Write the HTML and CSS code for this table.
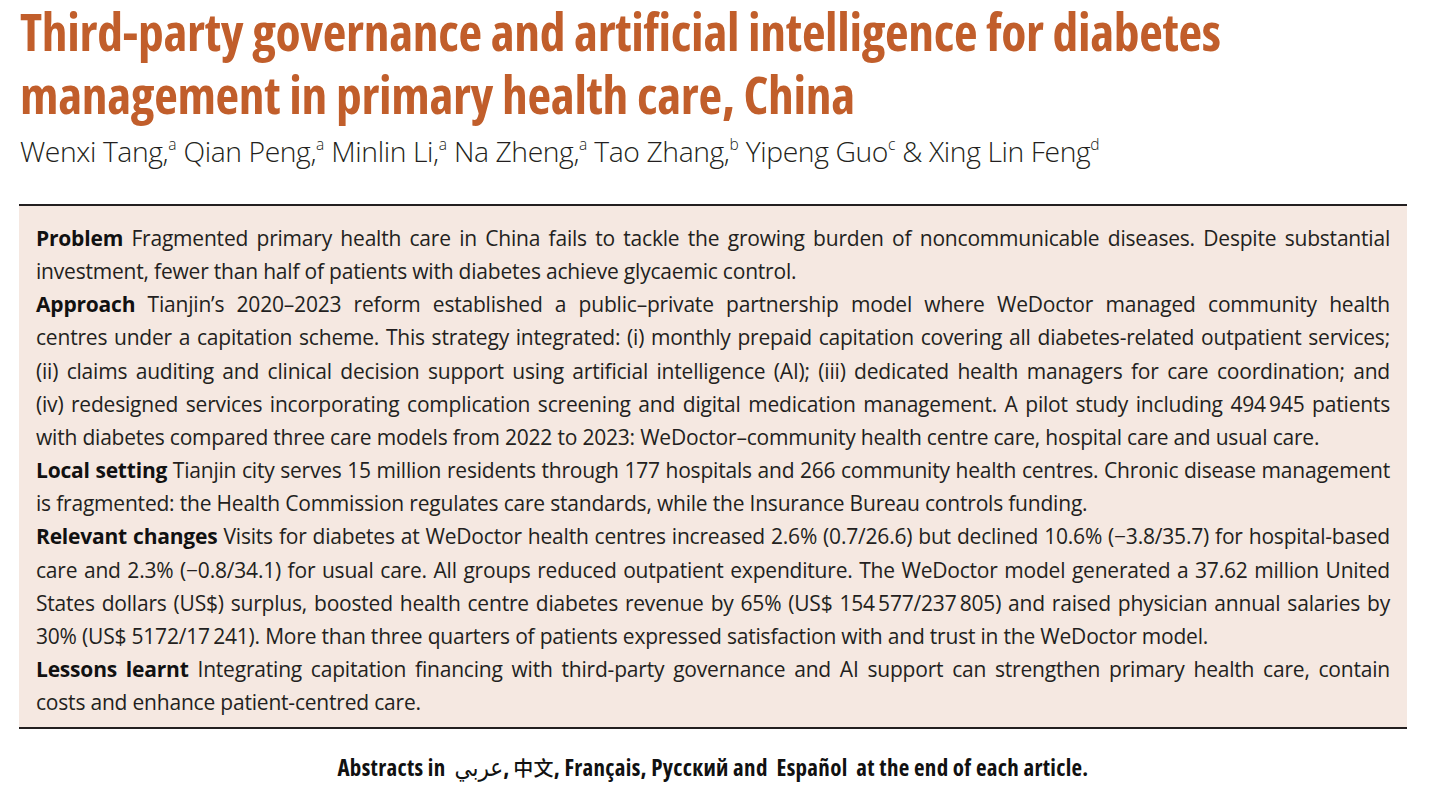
FILE: index.html
```html
<!DOCTYPE html>
<html lang="en">
<head>
<meta charset="utf-8">
<title>Third-party governance and artificial intelligence for diabetes management</title>
<link rel="stylesheet" href="styles.css">
</head>
<body>
<main class="page">
  <h1 class="title">Third-party governance and artificial intelligence for diabetes management in primary health care, China</h1>
  <p class="authors">Wenxi Tang,<sup>a</sup> Qian Peng,<sup>a</sup> Minlin Li,<sup>a</sup> Na Zheng,<sup>a</sup> Tao Zhang,<sup>b</sup> Yipeng Guo<sup>c</sup> &amp; Xing Lin Feng<sup>d</sup></p>
  <section class="abstract">
    <p class="para">
      <span class="ln"><b>Problem</b> Fragmented primary health care in China fails to tackle the growing burden of noncommunicable diseases. Despite substantial</span>
      <span class="ln last">investment, fewer than half of patients with diabetes achieve glycaemic control.</span>
    </p>
    <p class="para">
      <span class="ln"><b>Approach</b> Tianjin’s 2020–2023 reform established a public–private partnership model where WeDoctor managed community health</span>
      <span class="ln">centres under a capitation scheme. This strategy integrated: (i) monthly prepaid capitation covering all diabetes-related outpatient services;</span>
      <span class="ln">(ii) claims auditing and clinical decision support using artificial intelligence (AI); (iii) dedicated health managers for care coordination; and</span>
      <span class="ln">(iv) redesigned services incorporating complication screening and digital medication management. A pilot study including 494&#8201;945 patients</span>
      <span class="ln last">with diabetes compared three care models from 2022 to 2023: WeDoctor–community health centre care, hospital care and usual care.</span>
    </p>
    <p class="para">
      <span class="ln"><b>Local setting</b> Tianjin city serves 15 million residents through 177 hospitals and 266 community health centres. Chronic disease management</span>
      <span class="ln last">is fragmented: the Health Commission regulates care standards, while the Insurance Bureau controls funding.</span>
    </p>
    <p class="para">
      <span class="ln"><b>Relevant changes</b> Visits for diabetes at WeDoctor health centres increased 2.6% (0.7/26.6) but declined 10.6% (−3.8/35.7) for hospital-based</span>
      <span class="ln">care and 2.3% (−0.8/34.1) for usual care. All groups reduced outpatient expenditure. The WeDoctor model generated a 37.62 million United</span>
      <span class="ln">States dollars (US$) surplus, boosted health centre diabetes revenue by 65% (US$ 154&#8201;577/237&#8201;805) and raised physician annual salaries by</span>
      <span class="ln last">30% (US$ 5172/17&#8201;241). More than three quarters of patients expressed satisfaction with and trust in the WeDoctor model.</span>
    </p>
    <p class="para">
      <span class="ln"><b>Lessons learnt</b> Integrating capitation financing with third-party governance and AI support can strengthen primary health care, contain</span>
      <span class="ln last">costs and enhance patient-centred care.</span>
    </p>
  </section>
  <p class="langs">Abstracts in&nbsp; <span class="ar" lang="ar" dir="rtl">عربي</span>, <span class="zh" lang="zh">中文</span>, Français, Русский and&nbsp; Español&nbsp; at the end of each article.</p>
</main>
</body>
</html>
```
FILE: styles.css
```css
html, body {
  margin: 0;
  padding: 0;
  background: #ffffff;
}

body {
  font-family: "Open Sans", "Noto Sans", "Liberation Sans", sans-serif;
  color: #231f20;
}

.page {
  width: 1433px;
  padding: 0 26px 0 19px;
  box-sizing: border-box;
}

.title {
  margin: 0;
  padding-left: 1px;
  font-family: "Open Sans", "Noto Sans", sans-serif;
  font-weight: 700;
  font-stretch: 75%;
  font-size: 51.5px;
  line-height: 63px;
  letter-spacing: -0.3px;
  color: #c15e2b;
  width: 1300px;
}

.authors {
  margin: 5px 0 0 1px;
  font-family: "Open Sans", "Noto Sans", sans-serif;
  font-weight: 300;
  font-stretch: 100%;
  font-size: 28.3px;
  line-height: 40px;
  letter-spacing: -0.4px;
  color: #231f20;
}

.authors sup {
  font-size: 0.55em;
  vertical-align: 0.8em;
  line-height: 0;
  letter-spacing: 0;
}

.abstract {
  margin-top: 33px;
  width: 1388px;
  box-sizing: border-box;
  background: #f5e8e1;
  border-top: 2px solid #231f20;
  border-bottom: 2px solid #231f20;
  padding: 16px 17px 8px 17px;
}

.para {
  margin: 0;
  font-family: "Open Sans", "Noto Sans", sans-serif;
  font-size: 21px;
  font-stretch: 90%;
  line-height: 33.15px;
  letter-spacing: -0.2px;
  color: #231f20;
}

.para b {
  font-weight: 700;
  color: #111;
}

.ln {
  display: block;
  text-align: justify;
  text-align-last: justify;
  white-space: nowrap;
}

.ln.last {
  text-align-last: left;
}

.langs {
  margin: 24px 0 0 0;
  text-align: center;
  font-family: "Open Sans", "Noto Sans", "Noto Sans CJK SC", sans-serif;
  font-weight: 700;
  font-stretch: 75%;
  font-size: 23px;
  line-height: 28px;
  letter-spacing: 0.3px;
  color: #111;
}

.langs .ar {
  font-family: "DejaVu Sans", "Noto Sans", sans-serif;
  font-weight: 400;
  font-size: 24px;
}

.langs .zh {
  font-family: "Noto Sans CJK SC", sans-serif;
  font-weight: 500;
  font-size: 20px;
}
```
